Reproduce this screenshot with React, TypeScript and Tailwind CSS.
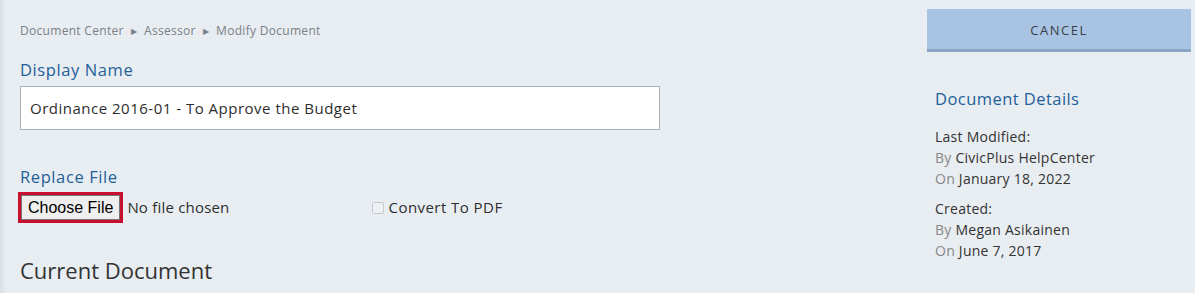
export default function App() {
  return (
    <div
      className="w-[1195px] h-[293px] overflow-hidden bg-[#e8edf2] relative flex"
      style={{ fontFamily: '"Open Sans", "Noto Sans", sans-serif' }}
    >
      <div className="absolute left-0 top-0 bottom-0 w-[6px] bg-gradient-to-r from-[#d9dee4] to-transparent" />
      <div className="w-[660px] ml-[20px] flex flex-col">
        <div className="mt-[23px] flex items-center text-[12px] tracking-[0.3px] text-[#7b7f86] leading-[16px]">
          <span>Document Center</span>
          <span className="mx-[7px] text-[8px]">▶</span>
          <span>Assessor</span>
          <span className="mx-[7px] text-[8px]">▶</span>
          <span>Modify Document</span>
        </div>
        <div className="mt-[21px] text-[16.5px] tracking-[0.6px] leading-[20px] text-[#1f5f98]">Display Name</div>
        <div className="mt-[6px] w-[640px] h-[44px] bg-white border border-[#a8b1bb] flex items-center pl-[9px] text-[15px] tracking-[0.5px] text-[#2e2e2e]">
          Ordinance 2016-01 - To Approve the Budget
        </div>
        <div className="mt-[37px] text-[16.5px] tracking-[0.6px] leading-[20px] text-[#1f5f98]">Replace File</div>
        <div className="mt-[5px] flex items-center">
          <div className="-ml-[2px] border-[3px] border-[#c8102e]">
            <div
              className="h-[25px] px-[6px] bg-[#efefef] border border-[#767676] flex items-center text-[16px] text-black"
              style={{ fontFamily: '"Liberation Sans", Arial, sans-serif' }}
            >
              Choose File
            </div>
          </div>
          <span className="ml-[4px] text-[15px] tracking-[0.2px] text-[#2e2e2e]">No file chosen</span>
          <span className="ml-[142px] w-[12px] h-[12px] border border-[#c5cad0] rounded-[2px] bg-[#eef1f4]" />
          <span className="ml-[5px] text-[15px] tracking-[0.45px] text-[#2e2e2e]">Convert To PDF</span>
        </div>
        <div className="mt-[34px] text-[22px] leading-[27px] text-[#333]">Current Document</div>
      </div>
      <div className="ml-[247px] flex flex-col w-[264px]">
        <div className="mt-[9px] h-[43px] bg-[#a8c4e2] border-b-[3px] border-[#8aa6c4] flex items-center justify-center pt-[3px] text-[13px] tracking-[1.5px] text-[#3a3f47]">
          CANCEL
        </div>
        <div className="mt-[36px] ml-[8px] text-[16.5px] tracking-[0.45px] leading-[22px] text-[#1f5f98]">Document Details</div>
        <div className="mt-[16px] ml-[8px] text-[14px] tracking-[0.25px] leading-[21px] text-[#333]">
          <div>Last Modified:</div>
          <div><span className="text-[#888]">By</span> CivicPlus HelpCenter</div>
          <div><span className="text-[#888]">On</span> January 18, 2022</div>
          <div className="mt-[9px]">Created:</div>
          <div><span className="text-[#888]">By</span> Megan Asikainen</div>
          <div><span className="text-[#888]">On</span> June 7, 2017</div>
        </div>
      </div>
    </div>
  );
}
